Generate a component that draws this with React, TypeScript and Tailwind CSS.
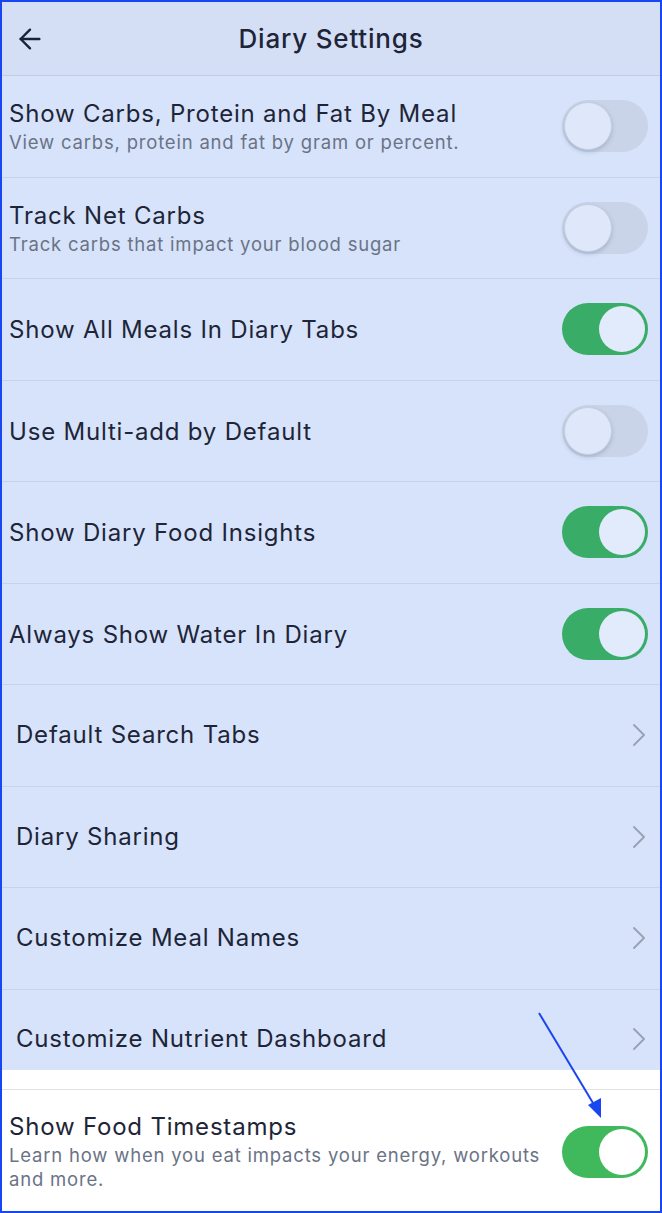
import { ArrowLeft } from 'lucide-react';

type Row =
  | { kind: 'toggle'; title: string; sub?: string; on: boolean }
  | { kind: 'link'; title: string };

const rows: Row[] = [
  { kind: 'toggle', title: 'Show Carbs, Protein and Fat By Meal', sub: 'View carbs, protein and fat by gram or percent.', on: false },
  { kind: 'toggle', title: 'Track Net Carbs', sub: 'Track carbs that impact your blood sugar', on: false },
  { kind: 'toggle', title: 'Show All Meals In Diary Tabs', on: true },
  { kind: 'toggle', title: 'Use Multi-add by Default', on: false },
  { kind: 'toggle', title: 'Show Diary Food Insights', on: true },
  { kind: 'toggle', title: 'Always Show Water In Diary', on: true },
  { kind: 'link', title: 'Default Search Tabs' },
  { kind: 'link', title: 'Diary Sharing' },
  { kind: 'link', title: 'Customize Meal Names' },
];

function Chevron() {
  return (
    <svg width="14" height="24" viewBox="0 0 14 24" className="shrink-0 mr-[2px]">
      <polyline points="2,2 12,12 2,22" fill="none" stroke="#9aa3b5" strokeWidth="2" strokeLinecap="round" strokeLinejoin="round" />
    </svg>
  );
}

function Toggle({ on, bright }: { on: boolean; bright?: boolean }) {
  if (on) {
    return (
      <div
        className={`w-[86px] h-[52px] rounded-full flex items-center justify-end p-[3px] shrink-0 ${
          bright ? 'bg-[#3fb95b]' : 'bg-[#39ad68]'
        }`}
      >
        <div className={`w-[46px] h-[46px] rounded-full ${bright ? 'bg-white' : 'bg-[#e2ebfb]'}`} />
      </div>
    );
  }
  return (
    <div className="w-[86px] h-[52px] rounded-full flex items-center justify-start p-[2px] shrink-0 bg-[#c9d4e8]">
      <div className="w-[48px] h-[48px] rounded-full bg-[#dfe8fa] border border-[#c4cfe2] shadow-[0_2px_4px_rgba(60,80,120,0.25)]" />
    </div>
  );
}

export default function App() {
  return (
    <div
      className="relative w-[662px] h-[1213px] overflow-hidden border-2 border-[#1746f2] bg-white text-[#1e2538]"
      style={{ fontFamily: 'Inter, "Liberation Sans", sans-serif' }}
    >
      {/* Header */}
      <div className="h-[74px] bg-[#d4dff6] border-b border-[#c2cde3] flex items-center relative">
        <ArrowLeft className="absolute left-[12px] w-[32px] h-[32px] text-[#1b2235]" strokeWidth={1.8} />
        <div className="w-full text-center text-[26px] font-medium tracking-[0.8px]">Diary Settings</div>
      </div>

      {/* Settings rows */}
      <div className="bg-[#d6e3fa]">
        {rows.map((r) => (
          <div
            key={r.title}
            className="h-[101.5px] border-b border-[#c7d3e8] flex items-center justify-between pr-[12px]"
          >
            {r.kind === 'toggle' ? (
              <>
                <div className="pl-[7px] pt-[2px] flex flex-col">
                  <div className="text-[24px] leading-[28px] tracking-[0.8px]">{r.title}</div>
                  {r.sub && (
                    <div className="mt-[2px] text-[18.5px] leading-[24px] text-[#6a7386] tracking-[0.8px]">{r.sub}</div>
                  )}
                </div>
                <Toggle on={r.on} />
              </>
            ) : (
              <>
                <div className="pl-[14px] text-[24px] tracking-[0.8px]">{r.title}</div>
                <Chevron />
              </>
            )}
          </div>
        ))}
      </div>

      <div className="h-[100px] bg-[linear-gradient(to_bottom,#d6e3fa_80px,#ffffff_80px)] border-b border-[#e2e2e2] flex items-center justify-between pr-[12px]">
        <div className="pl-[14px] text-[24px] tracking-[0.8px]">Customize Nutrient Dashboard</div>
        <Chevron />
      </div>

      {/* Last row */}
      <div className="flex items-center justify-between pr-[12px] pt-[23px]">
        <div className="pl-[7px] flex flex-col">
          <div className="text-[24px] leading-[28px] tracking-[0.8px]">Show Food Timestamps</div>
          <div className="mt-[2px] text-[18.5px] leading-[24px] text-[#6a7386] tracking-[0.8px] w-[540px]">
            Learn how when you eat impacts your energy, workouts and more.
          </div>
        </div>
        <Toggle on bright />
      </div>

      {/* Annotation arrow */}
      <svg className="absolute left-0 top-0 pointer-events-none" width="662" height="1213">
        <line x1="537" y1="1011" x2="594" y2="1106" stroke="#1a46f0" strokeWidth="2" />
        <polygon points="586,1103 599,1116 599,1096" fill="#1a46f0" />
      </svg>
    </div>
  );
}
